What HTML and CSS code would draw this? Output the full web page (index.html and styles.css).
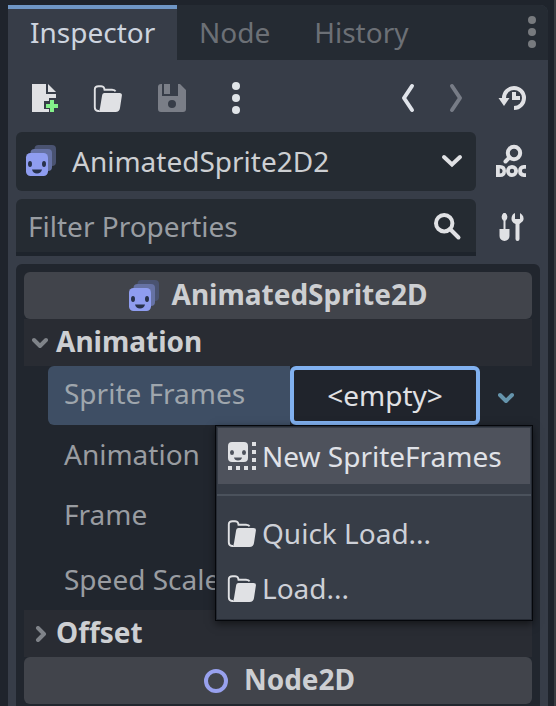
FILE: index.html
```
<!DOCTYPE html>
<html lang="en">
<head>
<meta charset="utf-8">
<title>Inspector</title>
<link rel="stylesheet" href="styles.css">
</head>
<body>
<svg class="defs" width="0" height="0">
  <defs>
    <symbol id="folder" viewBox="0 0 32 32">
      <path d="M7 28.2H6Q2.8 28 2.8 24.5V6.5Q2.8 3.500 6.5 3.500H9Q11.500 3.500 12.200 5.500L12.500 7H20Q23 7.200 23.500 8.500" fill="none" stroke="currentColor" stroke-width="1.9" transform="translate(0 .8)"/>
      <path d="M12.500 11H27.500Q30.200 11 29.900 13.500L28 26Q27.400 30 23.500 30H6Q7.700 29 8 26L10 14Q10.300 11 12.500 11Z" fill="currentColor"/>
    </symbol>
    <symbol id="dots" viewBox="0 0 8 32">
      <g fill="currentColor"><circle cx="4" cy="4" r="4"/><circle cx="4" cy="16" r="4"/><circle cx="4" cy="28" r="4"/></g>
    </symbol>
    <symbol id="sprite" viewBox="0 0 32 32">
      <rect x="9.500" y="0" width="21.500" height="21" rx="4" fill="#4a5371"/>
      <rect x="5.500" y="4" width="21.500" height="22" rx="4" fill="#6672a4"/>
      <rect x="1" y="8" width="22" height="23" rx="4.500" fill="#8f9df0"/>
      <g fill="#28324b"><ellipse cx="5" cy="19" rx="2" ry="3"/><ellipse cx="19" cy="19" rx="2" ry="3"/><path d="M7 24.500H17Q16 28.500 12 28.500T7 24.500Z"/></g>
    </symbol>
  </defs>
</svg>
<div class="dock">
  <div class="tabs">
    <div class="tab active">Inspector</div>
    <div class="tab">Node</div>
    <div class="tab">History</div>
    <svg class="dots tab-menu"><use href="#dots"/></svg>
  </div>
  <div class="toolbar">
    <svg class="icon" viewBox="0 0 32 32">
      <path d="M2 2H16V12H26V16H19V19H14V27H19V30H2Z" fill="#e0e1e4"/>
      <path d="M18 2L26 10H18Z" fill="#e0e1e4"/>
      <path d="M20 18H24V22H28V26H24V30H20V26H16V22H20Z" fill="#84f08a"/>
    </svg>
    <svg class="icon load"><use href="#folder"/></svg>
    <svg class="icon dim" viewBox="0 0 32 32">
      <path fill-rule="evenodd" d="M5 2H24L30 8V27Q30 30 27 30H5Q2 30 2 27V5Q2 2 5 2ZM6 2V14H22V2ZM16 18A4 4 0 1 0 16 26A4 4 0 1 0 16 18Z" fill="currentColor"/>
      <path d="M8 2H14V12H8Z" fill="currentColor"/>
    </svg>
    <svg class="dots"><use href="#dots"/></svg>
    <div class="history">
      <svg class="nav" viewBox="0 0 16 32"><path d="M12 4L4 16L12 28" fill="none" stroke="currentColor" stroke-width="4" stroke-linecap="round" stroke-linejoin="round"/></svg>
      <svg class="nav dim" viewBox="0 0 16 32"><path d="M4 4L12 16L4 28" fill="none" stroke="currentColor" stroke-width="4" stroke-linecap="round" stroke-linejoin="round"/></svg>
      <svg class="icon" viewBox="0 0 32 32">
        <path d="M8 16A10 10 0 1 1 18 26" fill="none" stroke="currentColor" stroke-width="4"/>
        <path d="M2.500 16H13.500L8 24Z" fill="currentColor"/><path d="M16 10H20V14H24V18H16Z" fill="currentColor"/>
      </svg>
    </div>
  </div>
  <div class="line object-line">
    <div class="field object">
      <svg class="icon"><use href="#sprite"/></svg>
      <span class="grow">AnimatedSprite2D2</span>
      <svg class="arrow" viewBox="0 0 24 16"><path d="M4 4L12 11.500L20 4" fill="none" stroke="currentColor" stroke-width="4" stroke-linecap="round"/></svg>
    </div>
    <svg class="icon doc" viewBox="0 0 32 34">
      <circle cx="19" cy="9" r="6.200" fill="none" stroke="currentColor" stroke-width="4"/>
      <path d="M14.500 13.500L10.500 17.500" stroke="currentColor" stroke-width="4" stroke-linecap="round"/>
      <path fill-rule="evenodd" fill="currentColor" d="M1 21H5Q11 21 11 27T5 33H1ZM4.800 24.500V29.500Q7.500 29.500 7.500 27T4.800 24.500ZM17 21A6 6 0 1 0 17 33A6 6 0 1 0 17 21ZM17 24.800A2.200 2.200 0 1 1 17 29.200A2.200 2.200 0 1 1 17 24.800Z"/>
      <path d="M31 22.900H29Q25 23.100 25 27T29 31.100H31" fill="none" stroke="currentColor" stroke-width="3.800"/>
    </svg>
  </div>
  <div class="line filter-line">
    <div class="field filter">
      <span class="grow">Filter Properties</span>
      <svg class="icon" viewBox="0 0 32 32"><circle cx="12.200" cy="12.200" r="8.200" fill="none" stroke="currentColor" stroke-width="4"/><path d="M18 18L26.500 26.500" stroke="currentColor" stroke-width="4" stroke-linecap="round"/></svg>
    </div>
    <svg class="icon tools" viewBox="0 0 32 32">
      <path fill="currentColor" d="M6.500 2H8.500Q12 5.500 9 9.500H8.500V18H12.500V25A5 5 0 0 1 2.500 25V18H6.500V9.500H6Q3 5.500 6.500 2Z"/>
      <path fill="currentColor" d="M18 2V8H23V2Q28 5 26 10L22.500 13V28Q22.500 30 20.500 30T18.500 28V13Q14 11 14.500 7Q15 3 18 2Z"/>
    </svg>
  </div>
  <div class="properties">
    <div class="category"><svg class="icon"><use href="#sprite"/></svg><span>AnimatedSprite2D</span></div>
    <div class="section open"><svg viewBox="0 0 16 16"><path d="M2 5L8 11L14 5"/></svg><span>Animation</span></div>
    <div class="frames">
      <div class="name">Sprite Frames</div>
      <div class="value">&lt;empty&gt;</div>
      <svg class="drop" viewBox="0 0 16 16"><path d="M2 5L8 11L14 5"/></svg>
      <div class="menu">
        <div class="item hover">
          <svg class="icon" viewBox="0 0 32 32"><path fill-rule="evenodd" fill="currentColor" d="M6 2H18Q22 2 22 6V18Q22 22 18 22H6Q2 22 2 18V6Q2 2 6 2ZM6 10A2 2.500 0 1 0 6 15A2 2.500 0 1 0 6 10ZM18 10A2 2.500 0 1 0 18 15A2 2.500 0 1 0 18 10ZM8 17.500Q8.500 20.500 12 20.500T16 17.500Z"/><path fill="currentColor" d="M26 2h4v4h-4zM26 10h4v4h-4zM26 18h4v4h-4zM26 26h4v4h-4zM18 26h4v4h-4zM10 26h4v4h-4zM2 26h4v4H2z"/></svg>
          <span>New SpriteFrames</span>
        </div>
        <div class="separator"></div>
        <div class="item"><svg class="icon"><use href="#folder"/></svg><span>Quick Load...</span></div>
        <div class="item"><svg class="icon"><use href="#folder"/></svg><span>Load...</span></div>
      </div>
    </div>
    <div class="property">Animation</div>
    <div class="property">Frame</div>
    <div class="property tall">Speed Scale</div>
    <div class="section"><svg viewBox="0 0 16 16"><path d="M6 2L12 8L6 14"/></svg><span>Offset</span></div>
    <div class="category node"><svg class="ring" viewBox="0 0 24 24"><circle cx="12" cy="12" r="10"/></svg><span>Node2D</span></div>
  </div>
</div>
</body>
</html>
```
FILE: styles.css
```
* { box-sizing: border-box; }
body {
  margin: 0;
  height: 706px;
  overflow: hidden;
  padding: 5px 0 0 8px;
  background: linear-gradient(90deg, #1f242c 554px, #3a3d42 554px);
  color: #cdcfd2;
  font: 28px/38px "Noto Sans", sans-serif;
  white-space: nowrap;
}
svg { display: block; flex: none; }
.defs { position: absolute; }
.dock { width: 540px; height: 701px; background: #373d48; border-radius: 0 8px 0 0; overflow: hidden; }
.icon { width: 32px; height: 32px; color: #e0e1e4; }
.dots { width: 8px; height: 32px; color: #e0e4e8; }
.grow { flex: 1; }
.dim { color: #7a7e87; }

.tabs { display: flex; height: 55px; background: #252b33; padding-right: 12px; }
.tab { padding: 8px 22px 0; color: #6c7076; }
.tab.active { width: 169px; padding-top: 4px; border-top: 4px solid #6f96c5; background: #373d48; color: #cdd4df; }
.tab-menu { margin: 11px 0 0 auto; color: #777a7e; }

.toolbar { display: flex; align-items: center; height: 72px; padding: 4px 20px 0 22px; gap: 32px; }
.toolbar .load { margin-left: -2px; }
.toolbar .dots { margin-left: 12px; }
.history { display: flex; align-items: center; margin-left: auto; }
.nav { width: 16px; height: 32px; margin-right: 32px; color: #e0e4ea; }
.nav.dim { color: #777c86; }

.line { display: flex; align-items: center; padding-left: 8px; gap: 19px; }
.object-line { height: 59px; margin-bottom: 8px; }
.filter-line { height: 57px; margin-bottom: 8px; }
.field { display: flex; align-items: center; width: 460px; height: 100%; background: #252b32; }
.object { padding: 0 12px 2px 9px; border-radius: 6px; }
.object .grow { padding-left: 15px; }
.arrow { width: 24px; height: 16px; color: #e0e1e4; }
.doc { height: 34px; margin-top: -1px; }
.tools { margin: -1px 0 0 2px; }
.filter { padding: 1px 12px 0 12px; border-radius: 6px 6px 0 0; border-bottom: 4px solid #1e242c; color: #999da2; }
.filter .icon { margin-top: 2px; }

.properties { width: 524px; height: 450px; margin-left: 8px; padding: 8px; background: #21262e; border-radius: 6px 6px 0 0; }
.category { display: flex; align-items: center; justify-content: center; gap: 12px; height: 47px; padding: 0 1px 3px 0; background: #41444b; border-radius: 6px; font-weight: 700; }
.category .icon { margin-top: 3px; }
.section { display: flex; align-items: center; gap: 8px; height: 47px; padding: 0 0 3px 8px; background: #292c33; font-weight: 700; }
.section svg, .drop { width: 16px; height: 16px; fill: none; stroke: #7f8389; stroke-width: 4; stroke-linecap: round; stroke-linejoin: round; }
.section svg { margin-top: 3px; }
.drop { stroke: #6594ac; margin: 4px 0 0 18px; }
.frames { position: relative; display: flex; align-items: center; height: 59px; margin-left: 24px; }
.name { width: 242px; height: 59px; padding: 8px 16px; background: #3e4e64; border-radius: 6px 0 0 6px; color: #9fa6ad; }
.value { width: 190px; height: 59px; padding-top: 6px; border: 4px solid #81b1f0; border-radius: 6px; background: #20242c; color: #e0e1e4; text-align: center; }
.property { height: 60px; padding: 10px 0 0 40px; color: #999ca1; }
.property.tall { height: 65px; padding-top: 15px; }
.ring { width: 24px; height: 24px; margin-top: 3px; fill: none; stroke: #98a1ee; stroke-width: 4; }
.node { gap: 16px; padding-left: 3px; padding-right: 0; }

.menu { position: absolute; z-index: 1; left: 167px; top: 59px; width: 318px; height: 196px; padding: 2px 1px; border: 1px solid #05070b; background: #373d47; box-shadow: inset 0 0 0 1px #252a33, 0 3px 8px #0008; }
.item { display: flex; align-items: center; gap: 4px; height: 55px; padding-left: 9px; color: #cdd0d7; }
.item.hover { height: 56px; margin: 0 1px; padding-left: 8px; background: #4e525c; color: #e0e2e8; }
.separator { height: 2px; margin: 10px 0 9px; background: #4b525c; }
```
